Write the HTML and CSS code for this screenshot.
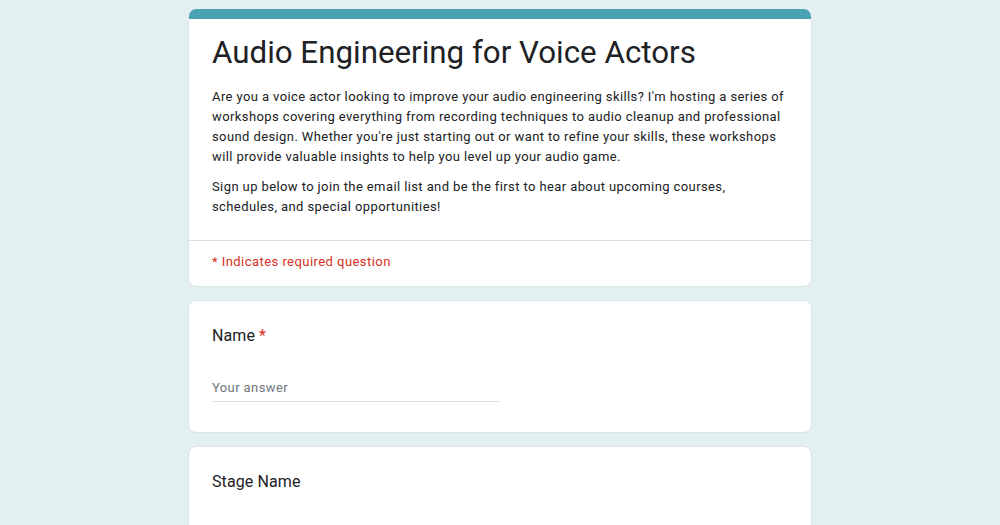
FILE: index.html
```html
<!DOCTYPE html>
<html lang="en">
<head>
<meta charset="utf-8">
<title>Audio Engineering for Voice Actors</title>
<link rel="stylesheet" href="styles.css">
</head>
<body>
<main class="form">
  <section class="card header-card">
    <div class="accent"></div>
    <div class="header-body">
      <h1 class="title">Audio Engineering for Voice Actors</h1>
      <p class="desc">Are you a voice actor looking to improve your audio engineering skills? I'm hosting a series of workshops covering everything from recording techniques to audio cleanup and professional sound design. Whether you're just starting out or want to refine your skills, these workshops will provide valuable insights to help you level up your audio game.</p>
      <p class="desc">Sign up below to join the email list and be the first to hear about upcoming courses, schedules, and special opportunities!</p>
    </div>
    <div class="required-note">* Indicates required question</div>
  </section>

  <section class="card question">
    <div class="label">Name <span class="star">*</span></div>
    <div class="answer"><span class="placeholder">Your answer</span></div>
  </section>

  <section class="card question question-cut">
    <div class="label">Stage Name</div>
  </section>
</main>
</body>
</html>
```

FILE: styles.css
```css
* { box-sizing: border-box; }
html, body { margin: 0; padding: 0; }
body {
  background: #e3f0f2;
  font-family: Roboto, "Noto Sans", Arial, sans-serif;
  color: #202124;
  height: 525px;
  overflow: hidden;
}
.form {
  width: 624px;
  margin: 0 auto;
  padding-top: 9px;
  display: flex;
  flex-direction: column;
  gap: 13px;
}
.card {
  background: #fff;
  border: 1px solid #dde3e6;
  border-radius: 8px;
}
.header-card {
  overflow: hidden;
  border-top: none;
}
.accent {
  height: 10px;
  background: #4aa3b3;
}
.header-body {
  padding: 14px 22px 23px 23px;
  border-bottom: 1px solid #dadce0;
}
.title {
  margin: 0;
  font-family: Roboto, "Open Sans", sans-serif;
  font-weight: 400;
  font-size: 31.3px;
  line-height: 40px;
  color: #202124;
  letter-spacing: 0;
}
.desc {
  margin: 14px 0 0;
  font-size: 13px;
  line-height: 20px;
  letter-spacing: 0.4px;
  color: #202124;
}
.desc + .desc { margin-top: 10px; }
.required-note {
  padding: 11px 23px 14px;
  font-size: 13px;
  line-height: 20px;
  color: #d93025;
  letter-spacing: 0.45px;
}
.question {
  padding: 23px 23px 30px;
  flex-shrink: 0;
}
.question-cut {
  min-height: 120px;
}
.label {
  font-size: 16px;
  line-height: 24px;
  letter-spacing: 0.1px;
  color: #202124;
}
.star { color: #d93025; }
.answer {
  margin-top: 29px;
  width: 288px;
  border-bottom: 1px solid #e0e0e0;
  padding-bottom: 3px;
}
.placeholder {
  font-size: 13px;
  line-height: 20px;
  color: #70757a;
  letter-spacing: 0.4px;
}
```
